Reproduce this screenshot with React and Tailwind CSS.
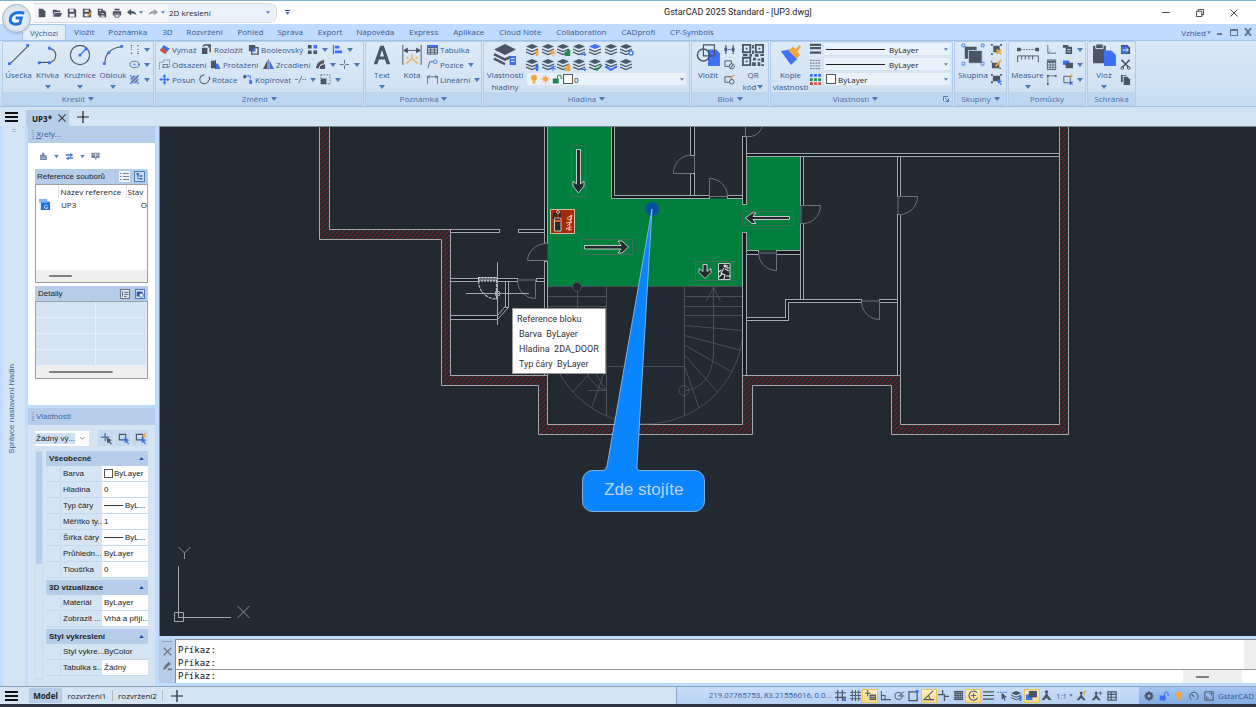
import React, { useState } from "react";

const TABS = [
    "Výchozí", "Vložit", "Poznámka", "3D", "Rozvržení", "Pohled", "Správa", "Export",
    "Nápověda", "Express", "Aplikace", "Cloud Note", "Collaboration", "CADprofi", "CP-Symbols",
];

const D = "#4b5565"; // dark icon strokes
const B = "#3d70f5"; // accent blue
const O = "#f3a63b"; // accent orange
const G = "#1f8a4c"; // accent green

/** Small line/fill icons, all drawn on a 12x12 board */
const ICONS = {
    newFile: <path d="M2 1h5l3 3v7H2z" fill={D} />,
    open: <path d="M1 2h4l1 1h4v2H3l-2 5zM3.500 6H12l-2 4.500H1.500z" fill={D} />,
    save: <><path d="M1 1h8.500L11 2.500V11H1z" fill={D} /><path d="M3 1.500h5v3H3zM3 7h6v3.500H3z" fill="#f4f4f4" /></>,
    saveAs: <><path d="M1 1h8L11 3v8H1z" fill={D} /><path d="M3 2h5v2.500H3zM3 7h4v3H3z" fill="#f4f4f4" /><path d="M6 11l1-3 4-4 1.500 1.500-4 4z" fill={O} /></>,
    saveAll: <><path d="M1 1h6v2h2l2 2v6H3V9H1z" fill={D} /><path d="M3 2h2v2H3zM5 6h3v1H5zM5 9h4v1.500H5z" fill="#f4f4f4" /></>,
    print: <><path d="M3 1h6v2H3zM1 4h10v5H9V7H3v2H1z" fill={D} /><path d="M3.500 8h5v3h-5z" fill="none" stroke={D} /></>,
    undo: <path d="M0 5l5-4v2.500c4 0 6 2 6.500 5.500C10 7 8 6.500 5 6.500V9z" fill={D} />,
    redo: <path d="M12 5L7 1v2.500C3 3.500 1 5.500.500 9 2 7 4 6.500 7 6.500V9z" fill="#9aa3ad" />,
    dots: <g fill={D}><path d="M2 1h1.500v1.500H2zM9 1h1.500v1.500H9zM2 9.500h1.500V11H2zM9 9.500h1.500V11H9z" /><path d="M2 5.500h1v1H2zM9.500 5.500h1v1h-1zM2 3.500h1v1H2zM9.500 7.500h1v1h-1z" /></g>,
    ellipse: <><ellipse cx="6" cy="6" rx="5" ry="3.500" fill="none" stroke={D} strokeWidth=".8" /><circle cx="6" cy="6" r="1" fill={B} /><circle cx="11" cy="6" r="1" fill={B} /></>,
    hatch: <><path d="M2 2h8v8H2z" fill="#8fa9e6" /><path d="M2 6l4-4M2 10l8-8M6 10l4-4" stroke={D} /><path d="M1 1h1.500v1.500H1zM9.500 1H11v1.500H9.500zM1 9.500h1.500V11H1zM9.500 9.500H11V11H9.500z" fill={B} /></>,
    erase: <><path d="M5 1l6.500 4-4.500 6L1 7z" fill={B} /><path d="M3.500 4L8.500 8.500 7 11 1 7z" fill="#e0502c" /></>,
    explode: <><path d="M1 4h6v7H1z" fill={D} /><path d="M2 2.500L4 1h6v8M8 3.500l2-2" fill="none" stroke={D} strokeWidth="1.600" /></>,
    bool: <><path d="M1 1h7v7H1z" fill={D} /><path d="M4 4h7v7H4z" fill="none" stroke={D} strokeWidth="1.500" /><path d="M5 5h3v3H5z" fill={B} /></>,
    array: <><path d="M1 1h4v4H1zM1 7h4v4H1zM7 7h4v4H7z" fill={D} /><path d="M7 1h4v4H7z" fill={B} /></>,
    align: <><path d="M1.500 1v10" stroke={D} /><path d="M3 2h5v3H3z" fill={B} /><path d="M3 7h8v3H3z" fill={B} /></>,
    offset: <><path d="M.500 11V3.500H5V1h6.500v8" fill="none" stroke={D} strokeWidth=".8" strokeDasharray="1.500 1" /><path d="M3.500 9h7M4.500 9V6h5v3" fill="none" stroke={D} strokeWidth=".8" /></>,
    stretch: <><path d="M1 2h5v8H1z" fill={D} /><path d="M6 5h2.500l3 6H6z" fill={B} /><path d="M6 1v10" stroke={D} /></>,
    mirror: <><path d="M5 1v10H0z" fill={D} /><path d="M7 1v10h5z" fill={B} /><path d="M6 0v12" stroke={D} strokeWidth=".6" /></>,
    fillet: <><path d="M1 10C2 5 4 2 10 1v4C6 5 5 7 4 10z" fill={D} /><path d="M5 11c.5-4 2-5 6-5v5z" fill={D} /></>,
    trim: <path d="M6 1v4M6 7v4M1 6h4M7 6h4" stroke={D} strokeWidth=".9" />,
    move: <><path d="M6 0l2 3H4zM6 12l2-3H4zM0 6l3-2v4zM12 6L9 4v4z" fill={B} /><path d="M6 2v8M2 6h8" stroke={B} strokeWidth="1.600" /></>,
    rotate: <><path d="M6 1a4.800 4.800 0 1 0 4.500 5.500" fill="none" stroke={D} strokeWidth="1.100" /><path d="M11 3c.6 1 .7 2 .5 3.500" fill="none" stroke={D} strokeWidth="1.500" /></>,
    copy: <><circle cx="3" cy="3" r="1.800" fill={D} /><path d="M5 2h4v6h2" fill="none" stroke={B} strokeWidth="1.300" strokeDasharray="3 1" /><path d="M8 7h3v4H8z" fill={B} /></>,
    breakAt: <path d="M0 6h3M8 6h1.500M10.500 6H12M4 10l3.500-8" stroke={D} strokeWidth=".8" />,
    scale: <><path d="M1 1h10v10H1z" fill="none" stroke={D} strokeDasharray="1.500 1.500" /><path d="M1 5h6v6H1z" fill={D} /></>,
    table: <><path d="M0 1h12v3H0z" fill={B} /><path d="M.5 4h11v7H.5zM0 6.500h12M0 9h12M4 4v7M8 4v7" fill="none" stroke={D} /></>,
    leader: <><path d="M1 10l2-7h4" fill="none" stroke={D} strokeWidth=".9" /><circle cx="9" cy="3" r="2" fill="none" stroke={B} /></>,
    linear: <path d="M.5 2v9M11.500 2v9M1 3h10M1 3l2-1.500M1 3l2 1.500M11 3L9 1.500M11 3L9 4.500" fill="none" stroke={D} strokeWidth=".8" />,
    blockBase: <><path d="M2 1v4M2 7v4M10 1v4M10 7v4" stroke={D} strokeWidth="1.200" /><path d="M.5 4h3v4h-3zM8.500 4h3v4h-3z" fill={D} /><path d="M4 6h4" stroke={B} /></>,
    blockDef: <><path d="M1 2h7v6H1z" fill="none" stroke={D} /><circle cx="8.500" cy="8" r="2.800" fill="#cfe0f2" stroke={D} /><path d="M7 10l3-4" stroke={D} /></>,
    blockEdit: <><path d="M1 3h7v6H1z" fill="none" stroke={D} /><circle cx="8.500" cy="8.500" r="2.500" fill="#cfe0f2" stroke={D} /><path d="M7 5l4-4" stroke={O} strokeWidth="1.600" /></>,
    weights: <path d="M0 1h12M0 4.500h12M0 9.500h12" stroke={D} strokeWidth="2.400" />,
    linetypes: <path d="M0 1.500h12M0 4.500h12M0 7.500h12M0 10.500h12" stroke={D} strokeWidth=".9" strokeDasharray="2 1" />,
    palette: <><path d="M0 0h3v3H0zM4.500 0h3v3h-3zM9 0h3v3H9z" fill={B} /><path d="M0 4.500h3v3H0zM4.500 4.500h3v3h-3zM9 4.500h3v3H9z" fill={G} /><path d="M0 9h3v3H0z" fill="#c33a2c" /><path d="M4.500 9h3v3h-3zM9 9h3v3H9z" fill="#d8592c" /></>,
    ungroup: <><path d="M2.500 2h7v7h-7z" fill={D} /><path d="M0 0h2v2H0zM10 0h2v2h-2zM0 10h2v2H0z" fill={D} /><path d="M6 6l5 5M11 6l-5 5" stroke={O} strokeWidth="2" /></>,
    groupEdit: <><path d="M1 4h8v6H1z" fill={D} /><path d="M0 2h1.500v1.500H0zM9 9.500h2V11H9z" fill={D} /><path d="M5 8l6-7" stroke={O} strokeWidth="2" /></>,
    groupPick: <><path d="M2 2h8v6H2z" fill={D} /><path d="M0 0h2v2H0zM10 0h2v2h-2zM0 8h2v2H0z" fill={D} /><path d="M7 6l5 2-2 .8L12 12l-1 .5-2-3-1.500 1z" fill={B} /></>,
    ucs: <><path d="M2 1v9h9" fill="none" stroke={D} strokeWidth=".9" /><path d="M2 10l4-4" stroke={D} strokeWidth=".8" strokeDasharray="1 1" /></>,
    calc: <><path d="M1.500 1h9v10.500h-9z" fill="none" stroke={D} /><path d="M2 2h8v2H2z" fill={D} /><path d="M2 6.500h8M2 9h8M4.500 4v7M7.500 4v7" stroke={D} strokeWidth=".8" /></>,
    coords: <><path d="M2 11V2h9" fill="none" stroke={D} strokeWidth=".8" /><path d="M1 1h2v2H1zM9.500 1h2v2h-2zM1 10h2v2H1z" fill={D} /></>,
    select: <><path d="M1 1h6v3H1z" fill={D} /><path d="M4 3h7v8H4z" fill={D} /><path d="M5.500 6h4M5.500 8.500h4" stroke="#dce8f5" strokeWidth=".9" /></>,
    select2: <><path d="M1 1.500h7v5H1z" fill={B} /><path d="M4 4h8v6H4z" fill={D} /></>,
    filter: <><path d="M2 2.500h7v7H2z" fill="none" stroke={D} /><path d="M9 9l3 3M9 12V9h3" stroke={B} /><circle cx="10" cy="2" r="1.500" fill={O} /></>,
    pasteLink: <><path d="M1 1h7l3 3v7H1z" fill={D} /><circle cx="5" cy="6.500" r="4" fill={B} /><path d="M3 6.500h6M7 4.500l2 2-2 2" fill="none" stroke="#fff" /></>,
    cut: <><path d="M1.500 1l8 8M10.500 1l-8 8" stroke={D} strokeWidth="1.700" /><circle cx="2.500" cy="9.800" r="1.500" fill="none" stroke={D} /><circle cx="9.500" cy="9.800" r="1.500" fill="none" stroke={D} /></>,
    copyClip: <><path d="M1 1h6v1H3v7H1z" fill={D} /><path d="M4 3h4l3 3v6H4z" fill={D} /></>,
    bulb: <><circle cx="6" cy="4.500" r="3.700" fill={O} /><path d="M4.500 8h3v3.500h-3z" fill={O} /></>,
    sun: <><circle cx="6" cy="6" r="3" fill={O} /><path d="M6 0v12M0 6h12M1.800 1.800l8.400 8.400M10.200 1.800l-8.400 8.400" stroke={O} strokeWidth=".9" /></>,
    unlock: <><path d="M1 5.500h7v6H1z" fill={G} /><path d="M6.500 6V3.500a2.200 2.200 0 0 1 4.500 0V6" fill="none" stroke={G} strokeWidth="1.300" /></>,
    // status bar
    gridDots: <><path d="M3 0v12M8 0v12M0 3h12M0 8h12" stroke={D} strokeWidth="1.300" /><path d="M9 9h3v3H9z" fill={B} /></>,
    grid: <path d="M2.500 0v12M6 0v12M9.500 0v12M0 2.500h12M0 6h12M0 9.500h12" stroke={D} />,
    dynInput: <><path d="M3 0v7M0 3.500h6" stroke={D} strokeWidth="1.100" /><path d="M5 5h7v6H5z" fill={D} /><path d="M6 7h5M6 9h5" stroke="#ffe9a8" strokeWidth=".7" /></>,
    ortho: <path d="M1.500 1v9.500H12M1.500 6h4v4" fill="none" stroke={D} strokeWidth="1.100" />,
    polar: <><circle cx="5" cy="6.500" r="4" fill="none" stroke={D} /><path d="M5 6.500h6M5 6.500L11 2" stroke={D} strokeWidth=".9" /></>,
    osnap: <><path d="M1 2h9v9.500H1z" fill="none" stroke={D} strokeWidth="1.300" /><path d="M8.500 0h3v3h-3z" fill={B} /></>,
    track: <path d="M11 1L1 10.500h11M6 6l2 4" fill="none" stroke={D} strokeWidth="1.100" />,
    crossT: <path d="M5 0v5H0M7 12V7h5M5 5h2v2" fill="none" stroke={D} strokeWidth="1.400" />,
    transp: <><path d="M1 1h10v10H1z" fill={D} /><path d="M1 3h10M1 5h10M1 7h10M1 9h10" stroke="#c6d6ea" strokeDasharray="1 1" /></>,
    cycle: <><path d="M10.500 8.500A5 5 0 1 1 10 3" fill="none" stroke={D} strokeWidth="1.200" /><path d="M6 3.500v5M3.500 6h5" stroke={D} /></>,
    lwt: <path d="M0 2h12M0 6h12M0 10h12" stroke={D} strokeWidth="1.200" />,
    cursor: <><path d="M0 2.500h12" stroke={B} strokeDasharray="2 1" /><path d="M5 3l6 5-3 .3 1.500 3-1.200.5L7 9 5 10.500z" fill={D} /></>,
    blocks: <><path d="M0 5h7v6H0z" fill={B} /><path d="M3 1h9v7H3z" fill={D} /></>,
    person: <><circle cx="6" cy="2" r="1.800" fill={D} /><path d="M6 2l1.800 4L11.500 11H8.500L6 8.500 3.500 11h-3L4.200 6z" fill={D} /></>,
    personO: <><circle cx="5" cy="2.500" r="1.800" fill={D} /><path d="M5 3l1.500 3L10.500 11H7.500L5 8.500 2.500 11h-3l4-5z" fill={D} /><path d="M8 0h3L9 5H8z" fill={O} /></>,
    personS: <><circle cx="5" cy="2.500" r="1.800" fill={D} /><path d="M5 3l1.500 3L10.500 11H7.500L5 8.500 2.500 11h-3l4-5z" fill={D} /><path d="M10 0v5M7.800 2.500h4.500" stroke={D} /></>,
    tableS: <path d="M1 1h10v10H1zM1 4h10M1 7.500h10M5 1v10" fill="none" stroke={D} strokeWidth="1.400" />,
    gear: <><circle cx="6" cy="6" r="3.200" fill="none" stroke={D} strokeWidth="2.600" /><path d="M6 .3v2M6 9.700v2M.3 6h2M9.700 6h2M2 2l1.300 1.300M8.700 8.700L10 10M10 2L8.700 3.300M2 10l1.300-1.300" stroke={D} strokeWidth="1.800" /></>,
    unlockB: <><path d="M1 5.500h7v6H1z" fill={B} /><path d="M6.500 6V3.500a2.200 2.200 0 0 1 4.500 0V6" fill="none" stroke={B} strokeWidth="1.200" /></>,
    gauge: <><path d="M3 10.500a5 5 0 1 1 6 0" fill="none" stroke={D} strokeWidth="1.200" /><path d="M6 7l-2.500-3" stroke={D} strokeWidth="1.300" /></>,
    full: <><path d="M1 1h10v10H1z" fill="none" stroke={D} strokeWidth="1.200" /><path d="M3 6.500V9h2.500M6.500 3H9v2.500" fill="none" stroke={D} /></>,
    // palettes
    attach: <><path d="M1 4h3V1h3v3l4 2v6H1z" fill="#6f82ac" /><path d="M3 7.500h6M3 9.500h6" stroke="#fff" strokeWidth=".7" /></>,
    refresh: <path d="M1 5V3h6V1l4 3-4 3V5zM11 7v2H5v2L1 8.500 5 6v1z" fill="#4a78d0" />,
    help: <><path d="M0 1h12v8H8l-2 3-1-3H0z" fill="#7d87a3" /><path d="M6 2v6" stroke="#fff" /><path d="M7.500 3.500h2M7.500 5.500h2M2.500 3.500h2" stroke="#fff" /></>,
    listV: <path d="M0 2h2M4 2h8M0 6h2M4 6h8M0 10h2M4 10h8" stroke="#4d5d73" />,
    treeV: <><path d="M3 1v9h4M3 5h4" fill="none" stroke="#2c5ca8" strokeWidth="1.300" /><path d="M1 0h4v3H1zM7 4h4v2.500H7zM7 8.500h4V11H7z" fill="#2c5ca8" /></>,
    detail: <><path d="M.5.5h11v11H.5z" fill="#dfe5ec" stroke={D} /><path d="M3 3v6M5 4h5M5 6.500h5M5 9h3" stroke={D} /></>,
    preview: <><path d="M.5.5h11v11H.5z" fill="#dbe8f8" stroke="#2c5ca8" /><path d="M2 3h7v6H2z" fill="#2c5ca8" /><circle cx="7.500" cy="7.500" r="2.500" fill="#fff" stroke="#2c5ca8" /></>,
    plusPick: <><path d="M4.500 0v9M0 4.500h9" stroke="#3e69a8" strokeWidth="1.200" /><path d="M6 5l6 3-2.500.8L12 12l-1 .5L8.500 10 7 11.500z" fill={D} /></>,
    boxPick: <><path d="M1.500 1.500h7v6h-7z" fill="none" stroke={D} strokeWidth="1.200" /><path d="M7 5l5.500 3-2.500.8 2 3-1 .5-2-2.500-1.500 1.500z" fill={B} /></>,
    quickPick: <><path d="M1.500 1.500h7v6h-7z" fill="none" stroke={D} strokeWidth="1.200" /><path d="M7 5l5.500 3-2.500.8 2 3-1 .5-2-2.500-1.500 1.500z" fill={B} /><path d="M10.500 0v5M8 2.500h4" stroke={O} strokeWidth="1.200" /></>,
    dwg: <><path d="M2 3h10v9H2z" fill="#1c6df0" /><path d="M0 0h9v4H0z" fill="#7fb2fb" /><path d="M9.500 7.500a2 2 0 1 0 .2 2H8" fill="none" stroke="#fff" strokeWidth=".8" /></>,
    close: <path d="M1 1l10 10M11 1L1 11" stroke="#6c7683" strokeWidth="1.600" />,
    pen: <><path d="M1 11l2-5 5-5 2.500 2.500L5 9z" fill="#6c7683" /><path d="M7 10h5" stroke="#6c7683" strokeWidth="2" /></>,
};

function Icon({ name, className = "h-[11px] w-[11px]" }) {
    return (
        <svg viewBox="0 0 12 12" className={`shrink-0 overflow-visible ${className}`} aria-hidden="true">
            {ICONS[name]}
        </svg>
    );
}

function Arrow({ className = "h-1 w-[6px]" }) {
    return (
        <svg viewBox="0 0 6 4" className={`shrink-0 ${className}`} aria-hidden="true">
            <path d="M0 0h6L3 4z" fill="#4f7ab8" />
        </svg>
    );
}

/** Stack of sheets with a little badge in the corner */
function LayerIcon({ badge, color, className = "h-3 w-[14px]" }) {
    return (
        <svg viewBox="0 0 14 12" className={`shrink-0 ${className}`} aria-hidden="true">
            <path d="M6 0l6 2.500L6 5 0 2.500z" fill={badge === "top" ? B : D} />
            <path d="M0 5l6 2.500L12 5M0 8l6 2.500L12 8" fill="none" stroke={D} strokeWidth="1.200" />
            {badge === "dot" && <path d="M9.500 6h3v3l-.5 3h-2l-.5-3z" fill={color} />}
            {badge === "lock" && <path d="M8 8h5v4H8zM10 8V6h3v2" fill={color} stroke={color} strokeWidth=".5" />}
            {badge === "star" && <path d="M11 5.500v6.500M8 7l6 3.500M14 7l-6 3.500" stroke={color} />}
            {badge === "arrow" && <path d="M8 10.500h4.500M11 8.500l2 2-2 1.500" fill="none" stroke={color} />}
            {badge === "ring" && <circle cx="11" cy="9" r="2" fill="#fff" stroke={color} strokeWidth="1.400" />}
            {badge === "under" && <path d="M1 7l5 4 6-4" fill="none" stroke={B} strokeWidth="2" />}
            {badge === "check" && <path d="M6 9l2 2 5-5" fill="none" stroke={G} strokeWidth="1.500" />}
        </svg>
    );
}

const LAYER_TOOLS = [
    ["dot", O], ["star", O], ["lock", G], ["arrow", B], ["top", B], ["none", D], ["ring", B],
    ["dot", B], ["star", B], ["lock", O], ["arrow", B], ["check", G], ["under", B], ["none", D],
];

const BIG = {
    line: <><path d="M2 22L22 2" stroke={D} strokeWidth="1.200" /><path d="M0 20h3v3H0zM20 0h3v3h-3z" fill={B} /></>,
    pline: <><path d="M2 20h11c10 0 10-15 0-15" fill="none" stroke={D} strokeWidth="1.200" /><path d="M1 19h3v3H1zM12 19h3v3h-3zM12 3h3v3h-3z" fill={B} /></>,
    circle: <><circle cx="12" cy="12" r="10.500" fill="none" stroke={D} strokeWidth="1.200" /><path d="M12 12l6-6" stroke={B} strokeWidth="1.200" /><path d="M10.500 10.500h3v3h-3zM17 4h3v3h-3z" fill={B} /></>,
    arc: <><path d="M3 22C3 10 10 4 22 3" fill="none" stroke={D} strokeWidth="1.200" /><path d="M1 20h3v3H1zM6 8h3v3H6zM20 1h3v3h-3z" fill={B} /></>,
    text: <path d="M3 22L10 2h4l7 20h-4l-1.800-5H8.600L7 22zM9.700 13.500h4.500L12 6.500z" fill={D} />,
    dim: <><path d="M2 1v22M22 1v22M3 7h18M3 7l4-2.500v5zM21 7l-4-2.500v5z" fill={D} stroke={D} /><path d="M12 11v5M12 16l-7 6M12 16l7 6M6 14l2 2M18 14l-2 2" stroke={O} strokeWidth="1.300" /></>,
    layers: <><path d="M12 0l12 6-12 6L0 6z" fill={D} /><path d="M0 11l12 6 6-3M0 16l12 6" fill="none" stroke={D} strokeWidth="2.600" /><path d="M17 13h7v10h-7z" fill={B} /><path d="M18.500 16h4M18.500 19h4" stroke="#fff" /></>,
    insert: <><path d="M12 6h9l4 4v14H12z" fill={B} /><circle cx="7" cy="12" r="6.500" fill="none" stroke={D} strokeWidth="1.600" /><path d="M7 1h12v12H7z" fill="none" stroke={D} strokeWidth="1.300" /></>,
    qr: <><path d="M1 1h8v8H1zM15 1h8v8h-8zM1 15h8v8H1z" fill="none" stroke={D} strokeWidth="2" /><path d="M4 4h2v2H4zM18 4h2v2h-2zM4 18h2v2H4zM11 1h2v4h-2zM11 7h2v4h-2zM1 11h5v2H1zM8 11h3v3H8zM14 11h4v3h-4zM20 11h4v2h-4zM12 15h3v3h-3zM17 16h3v2h-3zM21 15h3v5h-3zM11 20h4v4h-4zM17 20h3v4h-3zM21 22h3v2h-3z" fill={D} /></>,
    brush: <><path d="M1 8l9-2 9 10-7 7z" fill={B} /><path d="M9 7l5-4 3 3 4-5 2 2-4 5 3 4-4 4z" fill={O} /></>,
    group: <><path d="M3 3h13v13H3z" fill={D} /><path d="M7 7h15v14H7z" fill={D} stroke="#c9dcf0" /><path d="M0 0h3v3H0zM21 0h3v3h-3zM0 20h3v3H0zM21 20h3v3h-3z" fill="#e6eef8" stroke="#4d82d8" /></>,
    measure: <><path d="M0 4h4v4H0zM20 4h4v4h-4z" fill={D} /><path d="M4 6h16" stroke={D} strokeDasharray="1.500 1.500" /><path d="M.7 20v-7h22.600v7M5 13v4M9 13v4M13 13v4M17 13v4" fill="none" stroke={D} /></>,
    paste: <><path d="M0 2h14v19H0z" fill={D} /><path d="M3 0h8v5H3z" fill={D} stroke="#dbe7f5" /><path d="M12 7h8l5 5v12H12z" fill={B} /></>,
};

function BigTool({ icon, label, second, arrow, className }) {
    return (
        <button className={`flex shrink-0 flex-col items-center pt-[2px] ${className}`}>
            <svg viewBox="0 0 24 24" className="h-[22px] w-6 overflow-visible" aria-hidden="true">{BIG[icon]}</svg>
            <span className="mt-[3px] h-3 whitespace-nowrap leading-3">{label}</span>
            {second && <span className="flex h-[11px] items-center gap-px whitespace-nowrap leading-[11px]">{second}{arrow && <Arrow />}</span>}
            {arrow && !second && <span className="mt-1"><Arrow /></span>}
        </button>
    );
}

function Tool({ icon, label, arrow, className = "" }) {
    return (
        <button aria-label={label || icon} className={`flex h-[15px] shrink-0 items-center gap-[2px] whitespace-nowrap text-left ${className}`}>
            <Icon name={icon} />
            {label && <span>{label}</span>}
            {arrow && <span className="ml-[2px]"><Arrow /></span>}
        </button>
    );
}

function Panel({ title, arrow, launcher, className, children }) {
    return (
        <section className={`mr-px flex shrink-0 flex-col overflow-hidden rounded-xs border border-[#b3cdea] bg-linear-to-b from-[#dde9f6] to-[#cfe0f2] ${className}`}>
            <div className="flex h-[52px]">{children}</div>
            <div className="flex h-[13px] items-center justify-center gap-[3px] bg-[#bed7f1] text-[#4a6fa8]">
                <span className={launcher ? "ml-auto" : ""}>{title}</span>
                {arrow && <Arrow />}
                {launcher && (
                    <button aria-label="Další nastavení" className="mr-[3px] ml-auto">
                        <svg viewBox="0 0 6 6" className="h-[6px] w-[6px]"><path d="M.5 5V.5H5M2 2l3.500 3.500M5.500 2.500v3h-3" fill="none" stroke="#4f7ab8" /></svg>
                    </button>
                )}
            </div>
        </section>
    );
}

function Combo({ label, value, line, swatch, children }) {
    return (
        <div className="flex h-[14px] w-full items-center border border-[#d5e3f2] bg-[#e9f1fa] px-[2px] text-[#1e1e1e]">
            {children}
            {line && <span className="mr-1 h-px w-[59px] shrink-0 bg-[#222]" />}
            {swatch && <span className="mr-[2px] h-[10px] w-[10px] shrink-0 border border-[#555] bg-white" />}
            <select aria-label={label} className="min-w-0 flex-1 appearance-none bg-transparent outline-none">
                <option>{value}</option>
            </select>
            <Arrow className="h-[3px] w-[4px]" />
        </div>
    );
}

function TitleBar() {
    const quick = ["newFile", "open", "save", "saveAs", "saveAll", "print", "undo"];
    return (
        <header className="flex h-6 shrink-0 items-center border-t border-[#7fb0c8] bg-white">
            <div className="ml-[34px] flex h-5 items-center rounded-r-lg border-y border-r border-[#d4dbe4] bg-[#f5f6f8] pr-[2px]">
                {quick.map((q) => (
                    <button key={q} aria-label={q} className="flex w-[15px] justify-center"><Icon name={q} className="h-[10px] w-[10px]" /></button>
                ))}
                <Arrow className="h-[3px] w-[4px]" />
                <button aria-label="redo" className="ml-[2px] flex w-4 justify-center"><Icon name="redo" className="h-[10px] w-[10px]" /></button>
                <Arrow className="h-[3px] w-[4px]" />
                <div className="ml-[3px] flex h-full w-[106px] items-center bg-[#e9f2fb] pr-1">
                    <select aria-label="Pracovní prostor" className="flex-1 appearance-none bg-transparent pl-px text-[#222] outline-none">
                        <option>2D kreslení</option>
                    </select>
                    <Arrow className="h-[3px] w-[4px]" />
                </div>
            </div>
            <button aria-label="Přizpůsobit" className="ml-2 flex flex-col items-center gap-px"><span className="h-px w-[5px] bg-[#334a78]" /><Arrow className="h-[3px] w-[5px]" /></button>
            <h1 className="flex-1 pl-[374px] font-[Roboto,sans-serif] text-[9px] whitespace-nowrap text-[#222]">GstarCAD 2025 Standard - [UP3.dwg]</h1>
            <div className="flex items-center text-[#222]">
                <button aria-label="Minimalizovat" className="flex w-[34px] justify-center"><span className="h-px w-2 bg-[#555]" /></button>
                <button aria-label="Obnovit" className="flex w-[34px] justify-center">
                    <svg viewBox="0 0 9 9" className="h-2 w-2"><path d="M.5 2.500h6v6h-6zM2.500 2.500v-2h6v6h-2" fill="none" stroke="#333" /></svg>
                </button>
                <button aria-label="Zavřít" className="mr-[5px] flex w-[34px] justify-center">
                    <svg viewBox="0 0 9 9" className="h-2 w-2"><path d="M.5.5l8 8M8.500.5l-8 8" stroke="#333" /></svg>
                </button>
            </div>
        </header>
    );
}

function RibbonTabs() {
    const [active, setActive] = useState("Výchozí");
    return (
        <nav className="flex h-4 shrink-0 items-center bg-[#bfdbff] pl-[22px] text-[#35578f]">
            {TABS.map((t, i) => (
                <button
                    key={t}
                    onClick={() => setActive(t)}
                    className={`h-4 rounded-t-xs px-[7px] leading-4 whitespace-nowrap ${i > 8 || i % 2 === 0 ? "mr-px" : ""} ${t === active ? "border border-b-0 border-[#a9c6ea] bg-[#e3eef9] leading-[15px]" : ""}`}
                >
                    {t}
                </button>
            ))}
            <div className="ml-auto flex items-center gap-[6px] pr-1">
                <button className="flex items-center gap-px">Vzhled<Arrow className="h-[3px] w-[4px]" /></button>
                <button aria-label="Minimalizovat výkres" className="mt-1 mr-[2px] h-[2px] w-[5px] bg-[#66738a]" />
                <button aria-label="Obnovit výkres" className="h-[7px] w-2 border border-t-2 border-[#66738a]" />
                <button aria-label="Zavřít výkres"><svg viewBox="0 0 8 8" className="h-2 w-2"><path d="M1 0l6 8M7 0L1 8" stroke="#66738a" strokeWidth="2" /></svg></button>
            </div>
        </nav>
    );
}

function Ribbon() {
    return (
        <div className="flex h-[67px] shrink-0 border-y border-[#9fc3ea] bg-linear-to-b from-[#dbe8f6] to-[#c9ddf3] pl-[2px] text-[#35578f]">
            <Panel title="Kreslit" arrow className="w-[152px]">
                <BigTool icon="line" label="Úsečka" className="ml-px w-[29px]" />
                <BigTool icon="pline" label="Křivka" arrow className="w-[29px]" />
                <BigTool icon="circle" label="Kružnice" arrow className="w-9" />
                <BigTool icon="arc" label="Oblouk" arrow className="w-[30px]" />
                <div className="ml-px">
                    <Tool icon="dots" arrow />
                    <Tool icon="ellipse" arrow />
                    <Tool icon="hatch" arrow />
                </div>
            </Panel>
            <Panel title="Změnit" arrow className="w-[209px]">
                <div className="pl-[3px]">
                    <div className="flex">
                        <Tool icon="erase" label="Vymaž" className="w-[42px]" />
                        <Tool icon="explode" label="Rozložit" className="w-[47px]" />
                        <Tool icon="bool" label="Booleovský" className="w-[59px]" />
                        <Tool icon="array" arrow className="w-[25px]" />
                        <Tool icon="align" arrow />
                    </div>
                    <div className="flex">
                        <Tool icon="offset" label="Odsazení" className="w-[51px]" />
                        <Tool icon="stretch" label="Protažení" className="w-[53px]" />
                        <Tool icon="mirror" label="Zrcadlení" className="w-[52px]" />
                        <Tool icon="fillet" arrow className="w-6" />
                        <Tool icon="trim" arrow />
                    </div>
                    <div className="flex">
                        <Tool icon="move" label="Posun" className="w-10" />
                        <Tool icon="rotate" label="Rotace" className="w-[43px]" />
                        <Tool icon="copy" label="Kopírovat" className="w-[53px]" />
                        <Tool icon="breakAt" arrow className="w-[25px]" />
                        <Tool icon="scale" arrow />
                    </div>
                </div>
            </Panel>
            <Panel title="Poznámka" arrow className="w-[117px]">
                <BigTool icon="text" label="Text" arrow className="ml-px w-[30px]" />
                <BigTool icon="dim" label="Kóta" className="w-[30px]" />
                <div>
                    <Tool icon="table" label="Tabulka" />
                    <Tool icon="leader" label="Pozice" arrow />
                    <Tool icon="linear" label="Lineární" arrow />
                </div>
            </Panel>
            <Panel title="Hladina" arrow className="w-[207px]">
                <BigTool icon="layers" label="Vlastnosti" second="hladiny" className="w-[42px]" />
                <div className="flex-1 pr-[2px]">
                    <div className="grid w-[110px] grid-cols-7">
                        {LAYER_TOOLS.map(([badge, color], i) => (
                            <button key={i} aria-label={`Hladina ${i + 1}`} className="flex h-[15px] items-center">
                                <LayerIcon badge={badge} color={color} />
                            </button>
                        ))}
                    </div>
                    <Combo label="Aktuální hladina" value="0">
                        <span className="mr-px flex gap-px">
                            <Icon name="bulb" className="h-[10px] w-[10px]" />
                            <Icon name="sun" className="h-[10px] w-[11px]" />
                            <Icon name="unlock" className="h-[10px] w-[10px]" />
                        </span>
                        <span className="mr-px h-[10px] w-[10px] shrink-0 border border-[#555] bg-white" />
                    </Combo>
                </div>
            </Panel>
            <Panel title="Blok" arrow className="w-[78px]">
                <BigTool icon="insert" label="Vložit" className="w-8" />
                <div className="w-[14px]">
                    <Tool icon="blockBase" />
                    <Tool icon="blockDef" />
                    <Tool icon="blockEdit" />
                </div>
                <BigTool icon="qr" label="QR" second="kód" arrow className="w-[30px]" />
            </Panel>
            <Panel title="Vlastnosti" arrow launcher className="w-[183px]">
                <BigTool icon="brush" label="Kopie" second="vlastností" className="w-[39px]" />
                <div className="w-[13px]">
                    <Tool icon="weights" />
                    <Tool icon="linetypes" />
                    <Tool icon="palette" />
                </div>
                <div className="flex flex-1 flex-col gap-px pr-px">
                    <Combo label="Tloušťka čáry" value="ByLayer" line />
                    <Combo label="Typ čáry" value="ByLayer" line />
                    <Combo label="Barva" value="ByLayer" swatch />
                </div>
            </Panel>
            <Panel title="Skupiny" arrow className="w-[53px]">
                <BigTool icon="group" label="Skupina" className="w-9" />
                <div>
                    <Tool icon="ungroup" />
                    <Tool icon="groupEdit" />
                    <Tool icon="groupPick" />
                </div>
            </Panel>
            <Panel title="Pomůcky" className="w-[78px]">
                <BigTool icon="measure" label="Measure" arrow className="w-[37px]" />
                <div className="w-4">
                    <Tool icon="ucs" />
                    <Tool icon="calc" />
                    <Tool icon="coords" />
                </div>
                <div>
                    <Tool icon="select" arrow />
                    <Tool icon="select2" arrow />
                    <Tool icon="filter" arrow />
                </div>
            </Panel>
            <Panel title="Schránka" className="w-[49px]">
                <BigTool icon="paste" label="Vlož" arrow className="w-8" />
                <div>
                    <Tool icon="pasteLink" />
                    <Tool icon="cut" />
                    <Tool icon="copyClip" />
                </div>
            </Panel>
        </div>
    );
}

function Burger() {
    return (
        <button aria-label="Nabídka" className="ml-[5px] flex w-[13px] shrink-0 flex-col gap-[2px]">
            <span className="h-[2px] bg-[#111]" />
            <span className="h-[2px] bg-[#111]" />
            <span className="h-[2px] bg-[#111]" />
        </button>
    );
}

function Plus() {
    return (
        <svg viewBox="0 0 12 12" className="h-3 w-3"><path d="M6 0v12M0 6h12" stroke="#222" strokeWidth="1.200" /></svg>
    );
}

function DocTabs() {
    return (
        <div className="flex h-[19px] shrink-0 items-center bg-[#d5e4f3]">
            <Burger />
            <div className="ml-2 flex h-4 w-[43px] items-center justify-between self-end bg-[#b6cde9] pr-[3px] pl-[6px]">
                <button className="font-bold text-[#1a1a1a]">UP3*</button>
                <button aria-label="Zavřít UP3"><svg viewBox="0 0 9 9" className="h-2 w-2"><path d="M.5.5l8 8M8.500.5l-8 8" stroke="#333" strokeWidth="1.200" /></svg></button>
            </div>
            <button aria-label="Nový výkres" className="ml-2"><Plus /></button>
        </div>
    );
}

function PaletteHead({ children }) {
    return (
        <div className="flex h-[17px] shrink-0 items-center gap-[2px] bg-[#b6cde9] pl-1 text-[#3c639f]">
            <span className="h-[9px] w-[2px] border-x border-dotted border-[#8ea6c6]" />
            <h2>{children}</h2>
        </div>
    );
}

function XrefPalette() {
    return (
        <div className="shrink-0 bg-white pb-[26px]">
            <PaletteHead><u>X</u>refy...</PaletteHead>
            <div className="flex h-[26px] items-center gap-[6px] pl-[11px]">
                <button aria-label="Připojit"><Icon name="attach" className="block h-2 w-[9px]" /></button>
                <Arrow className="h-[3px] w-[5px]" />
                <button aria-label="Obnovit"><Icon name="refresh" className="block h-[9px] w-[9px]" /></button>
                <Arrow className="h-[3px] w-[5px]" />
                <button aria-label="Nápověda"><Icon name="help" className="block h-2 w-[9px]" /></button>
            </div>
            <div className="mr-[7px] ml-[7px]">
                <div className="flex h-[15px] items-center bg-[#b6cde9] pr-[3px] pl-[2px]">
                    <h3 className="flex-1 text-[#222]">Reference souborů</h3>
                    <button aria-label="Seznam" className="mr-1 flex h-[11px] w-[11px] items-center justify-center bg-[#f0f4f8]"><Icon name="listV" className="h-[9px] w-[9px]" /></button>
                    <button aria-label="Strom" className="flex h-[11px] w-[11px] items-center justify-center border border-[#4f7ab8] bg-[#c9dcf2]"><Icon name="treeV" className="h-[7px] w-[7px]" /></button>
                </div>
                <div className="border border-[#9a9fa6]">
                    <table className="w-full table-fixed font-['Open_Sans','Noto_Sans',sans-serif] text-[#222]">
                        <thead>
                            <tr className="h-[13px] text-left">
                                <th className="w-[22px]" aria-label="Typ" />
                                <th className="w-[68px] border-l border-[#e3e3e3] pl-[2px] font-normal whitespace-nowrap">Název reference</th>
                                <th className="overflow-hidden border-l border-[#e3e3e3] pl-px font-normal">Stav</th>
                            </tr>
                        </thead>
                        <tbody>
                            <tr className="h-3">
                                <td className="pl-[3px]"><Icon name="dwg" className="block h-[11px] w-[11px]" /></td>
                                <td className="pl-[3px]">UP3</td>
                                <td className="text-right">O</td>
                            </tr>
                        </tbody>
                    </table>
                    <div className="h-[60px]" />
                    <div className="flex h-3 items-center bg-[#efefef] pl-[13px]"><span className="h-[2px] w-[23px] rounded bg-[#808080]" /></div>
                </div>
                <div className="mt-[3px] flex h-[15px] items-center bg-[#b6cde9] pr-[3px] pl-[3px]">
                    <h3 className="flex-1 text-[#222]">Detaily</h3>
                    <button aria-label="Podrobnosti" className="mr-[5px]"><Icon name="detail" className="block h-[10px] w-[10px]" /></button>
                    <button aria-label="Náhled"><Icon name="preview" className="block h-[10px] w-[10px]" /></button>
                </div>
                <div className="border border-[#9a9fa6] bg-[#d5e4f3]">
                    <div className="grid grid-cols-[60px_1fr]">
                        {Array.from({ length: 8 }).map((_, i) => (
                            <span key={i} className="h-4 border-r border-b border-[#e9f0f8]" />
                        ))}
                    </div>
                    <div className="flex h-3 items-center bg-[#efefef] pl-[13px]"><span className="h-[2px] w-[64px] rounded bg-[#808080]" /></div>
                </div>
            </div>
        </div>
    );
}

const PROPS = [
    ["Všeobecné", [
        ["Barva", "ByLayer", "swatch"], ["Hladina", "0"], ["Typ čáry", "ByL...", "line"], ["Měřítko ty...", "1"],
        ["Šířka čáry", "ByL...", "line"], ["Průhledn...", "ByLayer"], ["Tloušťka", "0"],
    ]],
    ["3D vizualizace", [["Materiál", "ByLayer"], ["Zobrazit ...", "Vrhá a přijí..."]]],
    ["Styl vykreslení", [["Styl vykre...", "ByColor", "flat"], ["Tabulka s...", "Žádný"], ["Vykreslit t...", "Model", "flat"]]],
];

function PropsPalette() {
    return (
        <div className="flex min-h-0 flex-1 flex-col bg-[#d5e4f3]">
            <PaletteHead>Vlastnosti</PaletteHead>
            <div className="flex h-[26px] shrink-0 items-center pr-[7px] pl-[7px]">
                <div className="flex h-[15px] w-[54px] items-center bg-white pr-1">
                    <select aria-label="Výběr" className="w-10 appearance-none bg-[#cfe0f4] pl-px text-[#222] outline-none"><option>Žádný vý...</option></select>
                    <svg viewBox="0 0 6 4" className="ml-auto h-[3px] w-[5px]"><path d="M0 0l3 3 3-3" fill="none" stroke="#666" /></svg>
                </div>
                <div className="ml-auto flex gap-px">
                    {["plusPick", "boxPick", "quickPick"].map((n) => (
                        <button key={n} aria-label={n} className="flex h-4 w-4 items-center justify-center bg-[#c6d9ee]"><Icon name={n} /></button>
                    ))}
                </div>
            </div>
            <div className="mb-[6px] flex min-h-0 flex-1 overflow-hidden pr-[7px] pl-[7px]">
                <div className="w-2 shrink-0 border border-[#c8daee]"><div className="h-[112px] bg-[#b6cde9]" /></div>
                <div className="ml-[3px] flex min-w-0 flex-1 flex-col gap-[2px]">
                    {PROPS.map(([group, rows]) => (
                        <fieldset key={group} className="min-w-0">
                            <legend className="flex h-[15px] w-full items-center justify-between bg-[#b6cde9] pr-1 pl-[3px] font-bold text-[#1d1d1d]">
                                {group}
                                <svg viewBox="0 0 6 4" className="h-[3px] w-[5px]"><path d="M0 4h6L3 0z" fill="#1d4fa8" /></svg>
                            </legend>
                            {rows.map(([name, value, kind]) => (
                                <div key={name} className="flex h-4 items-center border-b border-[#c5d8ee]">
                                    <label htmlFor={name} className="ml-[14px] w-[42px] shrink-0 border-l border-[#c5d8ee] pl-[2px] whitespace-nowrap text-[#222]">{name}</label>
                                    <div className={`flex h-[15px] min-w-0 flex-1 items-center pl-[2px] ${kind === "flat" ? "" : "bg-white"}`}>
                                        {kind === "swatch" && <span className="mr-px h-[9px] w-[9px] shrink-0 border border-[#555] bg-white" />}
                                        {kind === "line" && <span className="mr-[2px] h-px w-[19px] shrink-0 bg-[#333]" />}
                                        <input id={name} defaultValue={value} className="w-full min-w-0 bg-transparent text-[#222] outline-none" />
                                    </div>
                                </div>
                            ))}
                        </fieldset>
                    ))}
                </div>
            </div>
        </div>
    );
}

const OUTER =
    "M319.500 100V239.500H441.500V385.500H538.500V434.500H752.500V385.500H891.500V434.500H1068.500V100H1059.500V424.500H900.500V375.500H742.500V424.500H547.500V375.500H450.500V229.500H329.500V100z";

/** Wall bands: x, y, width, height */
const WALLS = [
    [544.5, 120, 3, 123], [544.5, 261.5, 3, 114], [450.5, 229.5, 49, 3], [518.5, 229.5, 26, 3],
    [450.5, 278.5, 28, 3], [497.5, 278.5, 20, 3], [536.5, 278.5, 8, 3], [450.5, 315.5, 47, 4],
    [505.5, 281.5, 3, 26], [611.5, 120, 3, 78.5], [611.5, 195.5, 98, 3], [727.5, 195.5, 15, 3],
    [690.5, 120, 4, 35.5], [690.5, 173.5, 4, 22], [742.5, 136.5, 4, 68], [742.5, 232.5, 4, 143],
    [746.5, 153.5, 313, 3], [800.5, 156.5, 3, 49], [800.5, 223.5, 3, 76], [897.5, 156.5, 3, 40],
    [897.5, 214.5, 3, 161], [746.5, 250.5, 12, 4], [776.5, 250.5, 24, 4], [785.5, 299.5, 76, 3],
    [879.5, 299.5, 18, 3], [785.5, 299.5, 3, 21], [746.5, 317.5, 42, 3],
];

const DOORS = [
    "M547 260.500H527.500A19 18 0 0 1 546 243.500",
    "M535.500 280V298.500A18 18 0 0 1 517.500 281M517 280H536",
    "M691 173.500H673.500A18 18 0 0 1 691 155M694.500 155v18",
    "M709.500 197V178.500A18 18 0 0 1 727.500 196.500H710",
    "M745.500 120v16.500h6A16 16 0 0 0 763 124",
    "M800 205.500H820.500A18 18 0 0 1 800 223.500M801 206v17",
    "M897 196.500H917.500A18 18 0 0 1 898 214.500M898 197v17",
    "M776.500 251V270.500A18 18 0 0 1 758.500 252M758 253H777",
    "M879.500 300V319.500A18 18 0 0 1 861.500 302M861 301H879",
];

function Plan() {
    return (
        <svg className="block h-full w-full" aria-label="Půdorys">
            <defs>
                <pattern id="brick" width="5" height="5" patternUnits="userSpaceOnUse">
                    <path d="M-1 6L6 -1M-1 1L1 -1M4 6L6 4" stroke="#982027" strokeWidth=".8" />
                </pattern>
                <pattern id="thin" width="2" height="2" patternUnits="userSpaceOnUse">
                    <path d="M0 0h1v1H0zM1 1h1v1H1z" fill="#0b0e12" />
                </pattern>
            </defs>
            <g transform="translate(-160 -127)" fill="none">
                <path d="M547.500 120H611.500V198.500H742.500V204.500H746.500V156.500H800.500V250.500H746.500V232.500H742.500V286.500H547.500z" fill="#007f3e" />
                <path d={OUTER} fill="#262a30" />
                <path d={OUTER} fill="url(#brick)" stroke="#a3a8ad" />

                {/* stairs */}
                <g stroke="#4b5159">
                    <path d="M547.500 286.500H742.500M547.500 296.500H606.500M547.500 306.500H606.500M606.500 286.500V416M684.500 286.500V416M606.500 366.500H684.500" />
                    <path d="M684.500 296.500H742M684.500 306.500H742M684.500 315.500H742M684.500 325.500L742 330.500M684.500 335.500L740 350M684.500 345L732 372M684.500 355L717.500 392M684.500 366L699 408" />
                    <path d="M742.500 338A98 98 0 0 1 548 338M606.500 366L591.500 408M590 373L573 392" />
                    <path d="M713.500 287V350C713.500 374 704 388 685 390.500M706 301.500L713.500 287 720.500 301.500M587 374Q594 387 606 390.500H588M606 390.500L596 374" />
                    <circle cx="684" cy="390.500" r="5" />
                    <path d="M577.500 287V310" />
                    <circle cx="577" cy="287" r="4.500" fill="#222930" />
                </g>

                {WALLS.map(([x, y, w, h], i) => (
                    <rect key={i} x={x} y={y} width={w} height={h} stroke="#a3a8ad" />
                ))}
                {/* cores go on last so that meeting walls open into each other */}
                {WALLS.map(([x, y, w, h], i) => (
                    <g key={i}>
                        <rect x={x + 0.5} y={y + 0.5} width={w - 1} height={h - 1} fill="#20262c" />
                        <rect x={x + 0.5} y={y + 0.5} width={w - 1} height={h - 1} fill="url(#thin)" />
                    </g>
                ))}
                <path d="M505.500 306L497.500 315.500M508.500 307.500L497.500 319.500" stroke="#a3a8ad" />
                <g stroke="#6d737a">{DOORS.map((d) => <path key={d} d={d} />)}</g>

                {/* highlighted door with the cursor on it */}
                <path d="M478.500 277.500h18.500v3.500h-18.500z" fill="#6d737a" stroke="#eee" strokeDasharray="2 1" />
                <path d="M478.500 281A18 18 0 0 0 496.500 299V281" stroke="#b5babe" strokeDasharray="3 1" strokeWidth="1.200" />
                <path d="M497.500 262V325M466 293.500H529M495.500 291.500h4v4h-4z" stroke="#a3a8ad" />

                {/* escape route signs */}
                <path d="M571.500 145.500h14v51h-14zM581.500 239.500h51v15h-51zM742.500 211.500h51v14h-51zM695.500 261.500h38v19h-38z" stroke="#3e6e55" />
                <g fill="#222930" stroke="#c3cbc7">
                    <path d="M576.500 149.500h4V184l3.500-3v5l-5.500 7-5.500-7v-5l3.500 3z" />
                    <path d="M584.500 245.500H621l-3-4.500h4l6.500 6-6.500 6h-4l3-4H584.500z" />
                    <path d="M789.500 216.500H753l3-3.500h-4l-6.500 5 6.500 5.500h4l-3-4h36.500z" />
                    <path d="M703 264.500h4v7l4-3v4l-6 6-6-6v-4l4 3z" />
                    <path d="M718.500 263.500h11.500v16h-11.500z" />
                </g>
                <circle cx="725" cy="266" r="1.500" fill="#dfe5e2" />
                <path d="M724 268l-3 5 4 2-1 4M725 269l4 2M721 270l-2 2M722 274l-3 3M727 265v3h3M726 276h5" stroke="#dfe5e2" strokeWidth="1.100" />
                <path d="M550.500 209.500h24v24h-24z" fill="#a52a05" stroke="#d6b9a8" />
                <path d="M554.500 218h6.500v13h-6.500z" fill="#222930" stroke="#c9c3bd" />
                <path d="M555 221h6" stroke="#e06030" strokeWidth="2" />
                <path d="M553.500 219q-.5-5.500 3-6.500v5M556.500 213h3.500v4.500" stroke="#20252b" strokeWidth="1.600" />
                <circle cx="558" cy="212" r="1.500" stroke="#c9c3bd" />
                <path d="M566 230q2-4 6-3M567 226l5-5M566 223l6-1M567 219l4 1 1-5-5 3M569 231l2-16M566 228l6 2" stroke="#e5cfc4" strokeWidth=".9" />

                {/* callout */}
                <circle cx="652" cy="209" r="7" fill="#074f9f" />
                <path d="M652 209L607 466q-1 4.500-4 4.500H592.500a10 10 0 0 0-10 10V501.500a10 10 0 0 0 10 10H694.500a10 10 0 0 0 10-10V480.500a10 10 0 0 0-10-10H640q-3.500 0-3-5z" fill="#0a84ff" stroke="#9dc4ea" strokeWidth=".8" />

                {/* axes */}
                <g stroke="#a3a8ad">
                    <path d="M178.500 566V617.500H231M174.500 612.500h9v9h-9z" />
                    <path d="M237.500 606l12 12M249.500 606l-12 12M178.500 547l6 6 6-6M184.500 553v6" stroke="#8d9398" />
                </g>
            </g>
        </svg>
    );
}

function Canvas() {
    return (
        <main className="relative min-h-0 flex-1 overflow-hidden border-t border-l border-[#7d8790] bg-[#222930]">
            <Plan />
            <span className="absolute top-[355px] left-[444px] font-['Liberation_Sans',sans-serif] text-[17px] leading-4 whitespace-nowrap text-[#b9d6f3]">Zde stojíte</span>
            <div role="tooltip" className="absolute top-[181px] left-[352px] h-[66px] w-[94px] border border-[#999] bg-white pt-[3px] pl-1 font-[Roboto,sans-serif] text-[9px] leading-[15px] whitespace-pre text-[#333]">
                <p>Reference bloku</p>
                <p className="pl-[2px]">Barva  ByLayer</p>
                <p className="pl-[2px]">Hladina  2DA_DOOR</p>
                <p className="pl-[2px]">Typ čáry  ByLayer</p>
            </div>
        </main>
    );
}

function CommandLine() {
    return (
        <div className="flex h-[50px] shrink-0 border-y-[3px] border-[#bfdbff] font-['DejaVu_Sans_Mono',monospace] text-[9px] text-[#111]">
            <div className="flex w-4 shrink-0 flex-col items-center gap-[5px] bg-[#b6cde9] pt-[2px]">
                <span className="h-px w-[10px] bg-[#8ba0bd]" />
                <button aria-label="Zavřít"><Icon name="close" className="block h-[9px] w-[9px]" /></button>
                <button aria-label="Nastavení"><Icon name="pen" className="block h-[10px] w-[10px]" /></button>
            </div>
            <div className="flex min-w-0 flex-1 flex-col border-t border-l border-[#858c94] bg-white">
                <div className="flex h-[30px] border-b border-[#9a9a9a]">
                    <div className="flex-1 pt-1 pl-[2px] leading-[13px]">
                        <p>Příkaz:</p>
                        <p>Příkaz:</p>
                    </div>
                    <div className="w-3 bg-[#efefef]" />
                </div>
                <div className="flex h-[13px] items-center pl-[2px]">
                    <label htmlFor="cmd">Příkaz:</label>
                    <input id="cmd" className="min-w-0 flex-1 bg-transparent outline-none" />
                    <div className="mr-[14px] flex h-full w-[59px] items-center bg-[#efefef] pl-[13px]"><span className="h-[2px] w-[13px] bg-[#808080]" /></div>
                </div>
            </div>
        </div>
    );
}

const STATUS = [
    ["gridDots"], ["grid"], ["dynInput", 1], ["ortho"], ["polar"], ["osnap"], ["track", 1], ["crossT"],
    ["transp"], ["cycle", 1], ["lwt"], ["cursor"], ["layers"], ["blocks", 1], ["person"],
];

function StatusBar() {
    return (
        <footer className="flex h-[18px] shrink-0 border-t border-[#8fa3bb] bg-linear-to-b from-[#c9defa] to-[#b7d1f3]">
            <div className="flex w-[677px] shrink-0 items-center border-r border-[#8fa3bb] bg-[#d5e4f3] text-[#222]">
                <Burger />
                <button className="ml-[11px] h-[15px] w-[33px] bg-[#b6cde9] leading-[15px] font-bold">Model</button>
                <button className="w-[51px] border-r border-[#b9b9b9]">rozvržení1</button>
                <button className="w-[50px] border-r border-[#b9b9b9]">rozvržení2</button>
                <button aria-label="Nové rozvržení" className="ml-2"><Plus /></button>
            </div>
            <div className="flex flex-1 items-center justify-end text-[#3e63a3]">
                <span className="font-[Roboto,sans-serif] whitespace-nowrap">219.07765753, 83.21556016, 0.0...</span>
                <div className="ml-[2px] flex w-[220px]">
                    {STATUS.map(([n, on]) => (
                        <button
                            key={n}
                            aria-label={n}
                            aria-pressed={!!on}
                            className={`flex h-[14px] min-w-0 flex-1 items-center justify-center ${on ? "border border-[#e8c35a] bg-linear-to-b from-[#fff0c4] to-[#fbd98a]" : ""}`}
                        >
                            {n === "layers" ? <LayerIcon badge="dot" color={B} className="h-[10px] w-3" /> : <Icon name={n} className="h-[11px] w-[11px]" />}
                        </button>
                    ))}
                </div>
                <button className="ml-[2px] flex w-[19px] items-center gap-[2px]">1:1<Arrow className="h-[3px] w-[4px]" /></button>
                <div className="flex w-11">
                    {["personO", "personS", "tableS"].map((n) => (
                        <button key={n} aria-label={n} className="flex flex-1 justify-center"><Icon name={n} className="h-[10px] w-[10px]" /></button>
                    ))}
                </div>
            </div>
            <div className="ml-5 flex items-center bg-linear-to-b from-[#a5c5f0] to-[#83ace2] pr-[2px] pl-[3px] text-[#2c55a0]">
                {["gear", "unlockB", "bulb", "gauge", "full"].map((n) => (
                    <button key={n} aria-label={n} className="flex w-[15px] justify-center"><Icon name={n} className="h-[10px] w-[10px]" /></button>
                ))}
                <span className="pl-px">GstarCAD</span>
            </div>
        </footer>
    );
}

export default function App() {
    return (
        <div className="relative flex h-screen flex-col overflow-hidden bg-[#bfdbff] font-['Open_Sans','Noto_Sans',sans-serif] text-[8px] leading-[11px]">
            <TitleBar />
            <RibbonTabs />
            <Ribbon />
            <button aria-label="GstarCAD" className="absolute top-1 left-[2px] h-[29px] w-[29px] rounded-full border border-[#9fb0c4] bg-radial from-white to-[#c3d2e4] shadow">
                <svg viewBox="0 0 28 28" className="h-full w-full" aria-hidden="true">
                    <path d="M22 8.500C14 6.500 8 9 7.500 15c-.2 4.500 5 6 10 4l1.500-5.500H13" fill="none" stroke="#1b74e8" strokeWidth="3" />
                </svg>
            </button>
            <DocTabs />
            <div className="flex min-h-0 flex-1">
                <aside className="ml-[3px] flex w-[22px] shrink-0 flex-col items-center justify-end bg-[#d5e4f3]">
                    <span className="mt-[3px] mb-auto h-[3px] w-1 border-y border-[#aab8ca]" />
                    <span className="mb-[232px] ml-[-6px] rotate-180 font-['Liberation_Sans',sans-serif] whitespace-nowrap text-[#3c5f99] [writing-mode:vertical-rl]">Správce nastavení hladin</span>
                </aside>
                <aside className="mr-1 ml-[3px] flex w-[127px] shrink-0 flex-col gap-[3px] font-['Liberation_Sans',sans-serif]">
                    <XrefPalette />
                    <PropsPalette />
                </aside>
                <div className="flex min-w-0 flex-1 flex-col">
                    <Canvas />
                    <CommandLine />
                </div>
            </div>
            <StatusBar />
            <div className="h-[3px] shrink-0 bg-[#2a3540]" />
        </div>
    );
}
